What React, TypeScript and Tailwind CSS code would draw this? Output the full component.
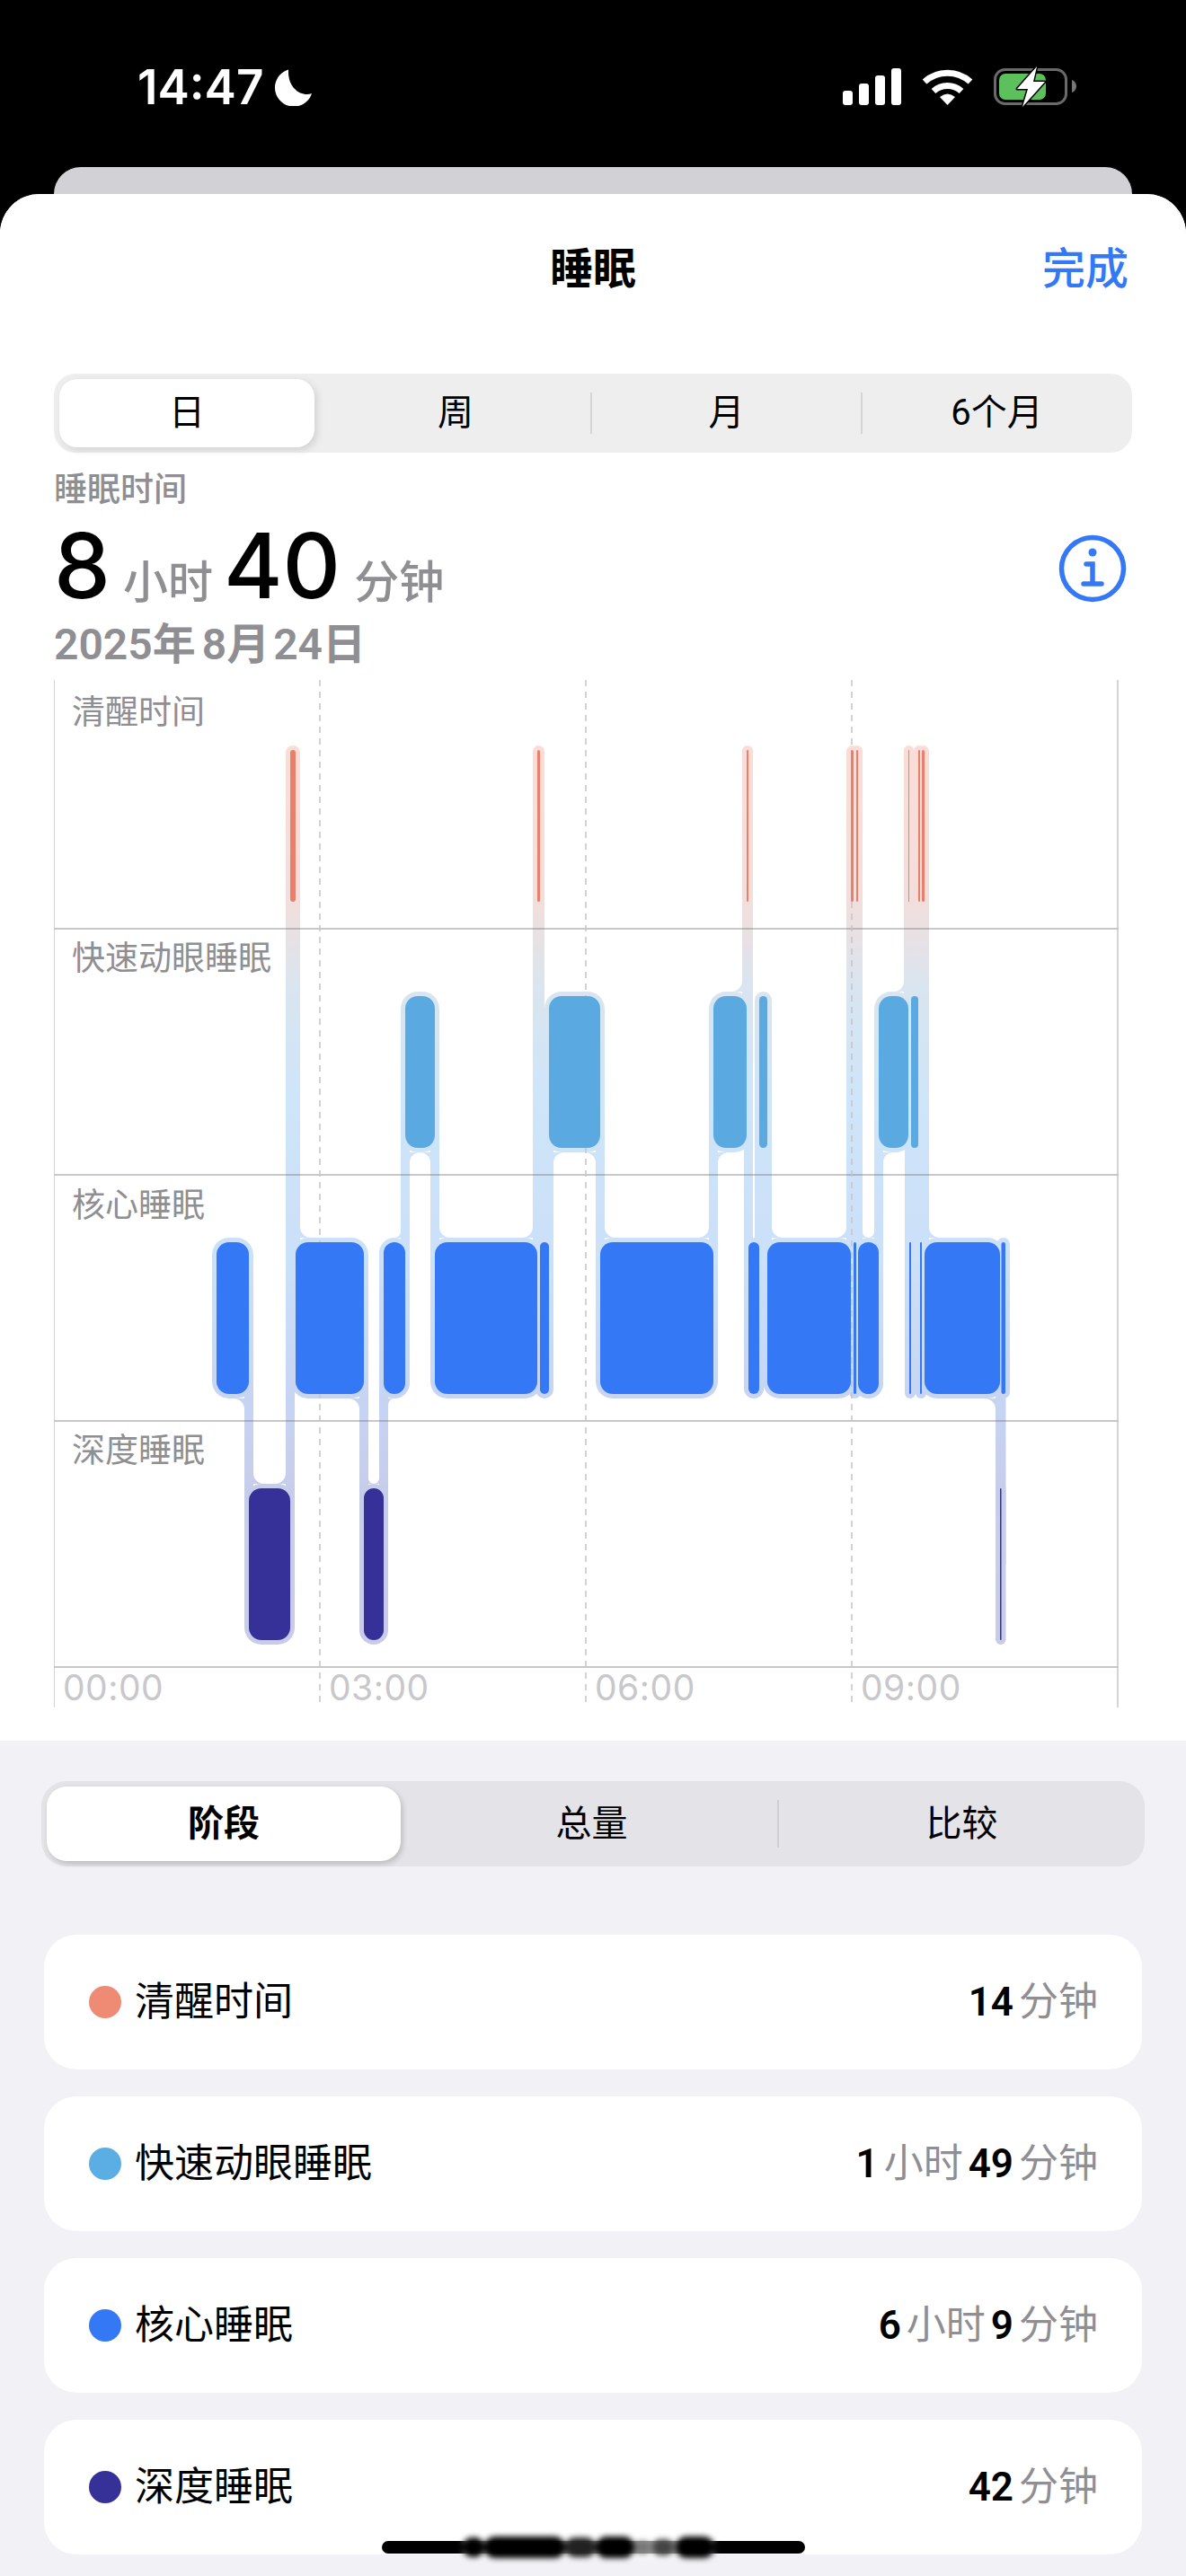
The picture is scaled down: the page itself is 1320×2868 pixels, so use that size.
const FONT = 'font-[Roboto,"Noto_Sans_CJK_SC",sans-serif]';

type Stage = 'awake' | 'rem' | 'core' | 'deep';

const ROWS: Record<Stage, { top: number; bottom: number; color: string }> = {
  awake: { top: 835, bottom: 1004, color: '#e9806b' },
  rem: { top: 1109, bottom: 1278, color: '#5aa9e0' },
  core: { top: 1383, bottom: 1552, color: '#3478f6' },
  deep: { top: 1657, bottom: 1826, color: '#353199' },
};

// segment boundaries read off the screenshot, each one starts where the last ended
const SEGMENTS: [number, Stage][] = [
  [241, 'core'],
  [277, 'deep'],
  [323, 'awake'],
  [329, 'core'],
  [405, 'deep'],
  [427, 'core'],
  [451, 'rem'],
  [484, 'core'],
  [598, 'awake'],
  [601, 'core'],
  [611, 'rem'],
  [668, 'core'],
  [794, 'rem'],
  [831, 'awake'],
  [833, 'core'],
  [845, 'rem'],
  [854, 'core'],
  [947, 'awake'],
  [950, 'core'],
  [953, 'awake'],
  [955, 'core'],
  [978, 'rem'],
  [1011, 'awake'],
  [1012, 'core'],
  [1014, 'rem'],
  [1022, 'awake'],
  [1024, 'core'],
  [1026, 'awake'],
  [1029, 'core'],
  [1113, 'deep'],
  [1114.5, 'core'],
];
const END = 1119;
const HALO = 5;

const bars = SEGMENTS.map(([x0, stage], i) => ({
  x0,
  x1: i + 1 < SEGMENTS.length ? SEGMENTS[i + 1][0] : END,
  stage,
}));

// concave corner where a link meets the halo of a bar
function fillet(x: number, y: number, dx: number, dy: number, r: number) {
  const sweep = dx * dy > 0 ? 0 : 1;
  return `M${x} ${y}L${x + dx * r} ${y}A${r} ${r} 0 0 ${sweep} ${x} ${y + dy * r}Z`;
}

function SleepChart() {
  const links = bars.slice(1).map((bar, i) => {
    const prev = bars[i];
    const cx = bar.x0;
    const prevRow = ROWS[prev.stage];
    const nextRow = ROWS[bar.stage];
    const prevIsUpper = prevRow.top < nextRow.top;
    const upper = prevIsUpper ? prev : bar;
    const lower = prevIsUpper ? bar : prev;
    const top = ROWS[upper.stage].bottom + HALO;
    const bottom = ROWS[lower.stage].top - HALO;
    const paths: string[] = [];
    const room = (b: typeof bar) => Math.min(12, (b.x1 - b.x0 - HALO * 2) / 2);
    const upperDir = upper === prev ? -1 : 1;
    const lowerDir = lower === prev ? -1 : 1;
    const upperR = room(upper);
    const lowerR = room(lower);
    if (upperR > 2) paths.push(fillet(cx + upperDir * HALO, top, upperDir, 1, upperR));
    if (lowerR > 2) paths.push(fillet(cx + lowerDir * HALO, bottom, lowerDir, -1, lowerR));
    return {
      cx,
      y: (prevRow.top + prevRow.bottom) / 2,
      y2: (nextRow.top + nextRow.bottom) / 2,
      d: paths.join(''),
    };
  });

  return (
    <svg className="absolute inset-0" width="1186" height="1146" viewBox="60 757 1186 1146">
      <defs>
        <linearGradient id="halo" gradientUnits="userSpaceOnUse" x1="0" y1="830" x2="0" y2="1830">
          <stop offset="0" stopColor="#fbdcd6" />
          <stop offset="0.17" stopColor="#f3dedb" />
          <stop offset="0.27" stopColor="#d9e5f0" />
          <stop offset="0.38" stopColor="#cfe5f8" />
          <stop offset="0.57" stopColor="#cbe0f9" />
          <stop offset="0.72" stopColor="#c6d5f3" />
          <stop offset="0.83" stopColor="#c6cdea" />
          <stop offset="1" stopColor="#c9cce9" />
        </linearGradient>
      </defs>

      {bars.map((b) => (
        <rect
          key={`h${b.x0}`}
          x={b.x0 - HALO}
          y={ROWS[b.stage].top - HALO}
          width={b.x1 - b.x0 + HALO * 2}
          height={169 + HALO * 2}
          rx={Math.min(14, (b.x1 - b.x0) / 2) + HALO}
          fill="url(#halo)"
        />
      ))}
      {links.map((l) => (
        <g key={`l${l.cx}`} fill="url(#halo)">
          <rect
            x={l.cx - HALO}
            y={Math.min(l.y, l.y2)}
            width={HALO * 2}
            height={Math.abs(l.y2 - l.y)}
          />
          <path d={l.d} />
        </g>
      ))}

      {[1034, 1308, 1582, 1856].map((y) => (
        <line key={y} x1="60" x2="1245" y1={y} y2={y} stroke="#6e6e73" strokeOpacity="0.5" strokeWidth="1.5" />
      ))}
      {[60, 1244].map((x) => (
        <line key={x} x1={x} x2={x} y1="757" y2="1901" stroke="#c6c6c8" strokeWidth="1.5" />
      ))}
      {[356, 652, 948].map((x) => (
        <line
          key={x}
          x1={x}
          x2={x}
          y1="757"
          y2="1901"
          stroke="#c4c4c8"
          strokeWidth="1.5"
          strokeDasharray="7 6"
        />
      ))}

      {bars.map((b) => (
        <rect
          key={`b${b.x0}`}
          x={b.x0}
          y={ROWS[b.stage].top}
          width={b.x1 - b.x0}
          height="169"
          rx={Math.min(14, (b.x1 - b.x0) / 2)}
          fill={ROWS[b.stage].color}
        />
      ))}
    </svg>
  );
}

function StatusBar() {
  return (
    <div className="h-[186px] flex items-start justify-between pl-[153px] pr-[122px] pt-[76px] text-white">
      <div className="flex items-center gap-[13px]">
        <span className="font-['Inter',sans-serif] text-[53px] font-semibold leading-[42px]">14:47</span>
        <svg width="42" height="41" viewBox="0 0 42 41" fill="white">
          <path d="M15 0.5A21 21 0 1 0 41 27C30 31 14 22 15 0.5Z" />
        </svg>
      </div>
      <div className="flex items-start gap-[23px]">
        <svg width="65" height="41" viewBox="0 0 65 41" fill="white">
          <rect x="0" y="25" width="11" height="16" rx="3" />
          <rect x="18" y="17" width="11" height="24" rx="3" />
          <rect x="36" y="8" width="11" height="33" rx="3" />
          <rect x="54" y="0" width="11" height="41" rx="3" />
        </svg>
        <svg width="57" height="41" viewBox="0 0 57 41" fill="none" stroke="white" strokeWidth="7">
          <path d="M3 15A38 38 0 0 1 54 15" />
          <path d="M13 25.5A23 23 0 0 1 44 25.5" />
          <path d="M20 32Q28.5 25 37 32L28.5 41Z" fill="white" stroke="none" />
        </svg>
        <svg width="92" height="41" viewBox="0 0 92 41" className="overflow-visible">
          <rect x="1.5" y="1.5" width="79" height="38" rx="11" fill="none" stroke="#6a6a6a" strokeWidth="3" />
          <rect x="6" y="6" width="52" height="29" rx="7" fill="#5cc15d" />
          <path d="M87 13C90 14 92 17 92 20S90 26 87 27Z" fill="#777" />
          <path
            d="M48 -2L26 23H38L32 43L57 15H44Z"
            fill="white"
            stroke="black"
            strokeWidth="3"
            strokeLinejoin="round"
            paintOrder="stroke"
          />
        </svg>
      </div>
    </div>
  );
}

function InfoIcon() {
  return (
    <svg width="76" height="76" viewBox="0 0 76 76" fill="none" stroke="#3478f6" strokeWidth="5.5" strokeLinecap="round">
      <circle cx="38" cy="38" r="34.5" />
      <circle cx="38" cy="20" r="4.5" fill="#3478f6" stroke="none" />
      <path d="M31 33H38V55M28 55H48" />
    </svg>
  );
}

const ROW_ITEMS: { label: string; color: string; value: [string, string][] }[] = [
  { label: '清醒时间', color: 'bg-[#ef8a74]', value: [['14', '分钟']] },
  { label: '快速动眼睡眠', color: 'bg-[#5aaee3]', value: [['1', '小时'], ['49', '分钟']] },
  { label: '核心睡眠', color: 'bg-[#3478f6]', value: [['6', '小时'], ['9', '分钟']] },
  { label: '深度睡眠', color: 'bg-[#353199]', value: [['42', '分钟']] },
];

function Smudge() {
  return (
    <div className="absolute left-[515px] top-[2823px] w-[280px] h-[26px] bg-white/60 flex items-center blur-[3px]">
      <div className="w-[24px] h-[22px] rounded-full bg-black" />
      <div className="w-[92px] h-[24px] rounded-full bg-black" />
      <div className="w-[34px] h-[22px] rounded-full bg-[#222]" />
      <div className="w-[44px] h-[24px] rounded-full bg-black" />
      <div className="w-[18px] h-[14px] rounded-full bg-[#777]" />
      <div className="w-[24px] h-[18px] rounded-full bg-[#444] mx-[2px]" />
      <div className="w-[44px] h-[24px] rounded-full bg-black" />
    </div>
  );
}

export default function App() {
  const ranges = ['周', '月', '6个月'];
  return (
    <div className={`relative w-[1320px] h-[2868px] bg-black overflow-hidden ${FONT}`}>
      <StatusBar />
      <div className="mx-[60px] h-[30px] rounded-t-[30px] bg-[#d1d1d6]" />
      <div className="h-[2652px] rounded-t-[44px] bg-[#f1f1f6] overflow-hidden">
        <div className="h-[1722px] bg-white">
          <div className="h-[168px] px-[64px] grid grid-cols-3 items-center">
            <div />
            <div className="text-center text-[48px] font-semibold text-black">睡眠</div>
            <div className="text-right text-[48px] font-medium text-[#3478f6]">完成</div>
          </div>

          <div className="mt-[32px] mx-[60px] h-[88px] rounded-[24px] bg-[#eeeeef] grid grid-cols-[297px_300px_301px_301px] items-center text-[40px] text-black">
            <div className="ml-[6px] w-[284px] h-[76px] rounded-[20px] bg-white shadow-[3px_3px_8px_rgba(0,0,0,0.12)] flex items-center justify-center">
              日
            </div>
            {ranges.map((r, i) => (
              <div
                key={r}
                className={`h-[46px] flex items-center justify-center ${i > 0 ? 'border-l-2 border-[#d4d4d6]' : ''}`}
              >
                {r}
              </div>
            ))}
          </div>

          <div className="mt-[22px] mx-[60px] text-[37px] leading-[40px] font-medium text-[#8e8e93]">睡眠时间</div>

          <div className="mt-[9px] mx-[60px] h-[112px] flex items-end justify-between">
            <div className="flex items-baseline text-[#8e8e93] text-[50px] font-medium">
              <span className="font-['Inter',sans-serif] text-[100px] leading-[112px] font-medium text-black">8</span>
              <span className="ml-[14px]">小时</span>
              <span className="ml-[12px] font-['Inter',sans-serif] text-[100px] leading-[112px] font-medium text-black">40</span>
              <span className="ml-[15px]">分钟</span>
            </div>
            <div className="mr-[6px] mb-[16px]">
              <InfoIcon />
            </div>
          </div>

          <div className="mt-[7px] mx-[60px] flex items-center h-[48px] text-[48px] font-semibold text-[#8e8e93]">
            <span>2025</span>
            <span>年</span>
            <span className="ml-[7px]">8</span>
            <span>月</span>
            <span className="ml-[4px]">24</span>
            <span>日</span>
          </div>

          <div className="relative mt-[15px] ml-[60px] w-[1186px] h-[1146px]">
            <SleepChart />
            <div className="relative text-[37px] leading-[44px] text-[#8e8e93]">
              <div className="h-[277px] pt-[15px] pl-[20px]">清醒时间</div>
              <div className="h-[274px] pt-[12px] pl-[20px]">快速动眼睡眠</div>
              <div className="h-[274px] pt-[13px] pl-[20px]">核心睡眠</div>
              <div className="h-[274px] pt-[12px] pl-[20px]">深度睡眠</div>
              <div className="grid grid-cols-[296px_296px_296px_296px] pt-[1px] font-['Inter',sans-serif] text-[39px] tracking-[0.5px] text-[#c7c7cc]">
                {['00:00', '03:00', '06:00', '09:00'].map((t) => (
                  <div key={t} className="pl-[10px]">
                    {t}
                  </div>
                ))}
              </div>
            </div>
          </div>
        </div>

        <div className="mt-[45px] mx-[46px] w-[1228px] h-[95px] rounded-[28px] bg-[#e3e3e8] grid grid-cols-[406px_413px_409px] items-center text-[40px] text-black">
          <div className="ml-[6px] w-[394px] h-[83px] rounded-[22px] bg-white font-bold shadow-[2px_3px_6px_rgba(0,0,0,0.18)] flex items-center justify-center">
            阶段
          </div>
          <div className="text-center">总量</div>
          <div className="h-[53px] flex items-center justify-center border-l-2 border-[#cfcfd3]">比较</div>
        </div>

        <div className="mt-[76px] mx-[49px] flex flex-col gap-[30px]">
          {ROW_ITEMS.map((item) => (
            <div key={item.label} className="h-[150px] rounded-[36px] bg-white flex items-center justify-between pl-[50px] pr-[49px]">
              <div className="flex items-center gap-[15px]">
                <span className={`w-[36px] h-[36px] rounded-full ${item.color}`} />
                <span className="text-[44px] text-black">{item.label}</span>
              </div>
              <div className="flex items-baseline gap-[6px] text-[44px]">
                {item.value.map(([n, unit]) => (
                  <span key={unit} className="flex items-baseline gap-[6px]">
                    <span className="font-semibold text-black">{n}</span>
                    <span className="text-[#8e8e93]">{unit}</span>
                  </span>
                ))}
              </div>
            </div>
          ))}
        </div>
      </div>

      <div className="absolute left-[425px] top-[2829px] w-[471px] h-[14px] rounded-full bg-black" />
      <Smudge />
    </div>
  );
}
